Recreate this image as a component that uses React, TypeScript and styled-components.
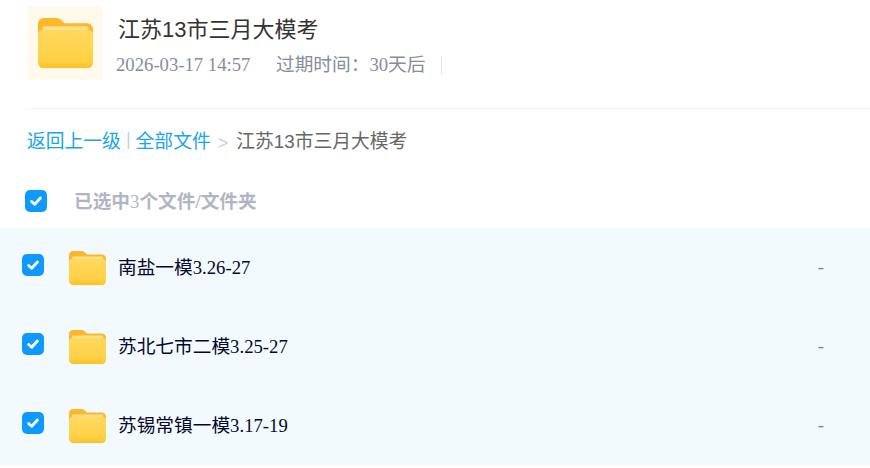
import React from "react";
import styled, { createGlobalStyle } from "styled-components";

const serif = `"Liberation Serif", "Noto Sans CJK SC", serif`;
const sans = `"Liberation Sans", "Noto Sans CJK SC", sans-serif`;

const GlobalStyle = createGlobalStyle`
  html, body {
    margin: 0;
    padding: 0;
    background: #fff;
    overflow: hidden;
  }
  * {
    box-sizing: border-box;
  }
`;

const Page = styled.div`
  width: 870px;
  height: 468px;
  overflow: hidden;
`;

const Header = styled.div`
  display: flex;
  margin-left: 27px;
  padding-top: 6px;
  height: 109px;
  border-bottom: 1px solid #f2f2f2;
`;

const Thumb = styled.div`
  width: 76px;
  height: 74px;
  background: #fffaec;
  border-radius: 4px;
  display: flex;
  align-items: center;
  justify-content: center;
`;

const HeaderInfo = styled.div`
  margin-left: 13px;
`;

const Title = styled.div`
  font-family: ${sans};
  font-size: 22px;
  line-height: 28px;
  margin: 10px 0 0 2px;
  color: #333;
`;

const Meta = styled.div`
  display: flex;
  align-items: center;
  margin-top: 9px;
  font-family: ${serif};
  font-size: 18.7px;
  line-height: 24px;
  color: #878c9c;
`;

const MetaDate = styled.span`
  width: 160px;
`;

const MetaDivider = styled.span`
  width: 1px;
  height: 19px;
  margin-left: 15px;
  background: #e6e6e6;
`;

const Breadcrumb = styled.div`
  display: flex;
  align-items: center;
  margin: 17px 0 0 27px;
  height: 26px;
  font-family: ${sans};
  font-size: 18.8px;
  color: #666;
`;

const Crumb = styled.span`
  color: #18a5ec;
`;

const Bar = styled.span`
  color: #c6d0da;
  margin: 0 5px;
  font-size: 18px;
`;

const Arrow = styled.span`
  color: #c6d0da;
  margin: 8px 8px 0 7px;
  font-size: 18px;
`;

const SelectBar = styled.div`
  display: flex;
  align-items: center;
  height: 55px;
  margin-top: 21px;
  padding: 0 0 0 25px;
`;

const SelectText = styled.span`
  margin: -2px 0 0 27px;
  font-family: ${serif};
  font-size: 18.7px;
  font-weight: 700;
  color: #b1b5c3;
`;

const Light = styled.span`
  font-weight: 400;
`;

const List = styled.div`
  background: #f2fafe;
  height: 237px;
`;

const Row = styled.div`
  display: flex;
  align-items: center;
  height: 79px;
  padding: 0 45px 0 22px;
`;

const Check = styled.div`
  width: 22px;
  height: 22px;
  border-radius: 5px;
  background: #0e99ff;
  display: flex;
  align-items: center;
  justify-content: center;
  flex: none;
`;

const RowCheck = styled(Check)`
  margin-top: -6px;
`;

const RowIcon = styled.div`
  margin: 1px 0 0 25px;
  display: flex;
`;

const RowName = styled.div`
  flex: 1;
  margin: -5px 0 0 12px;
  font-family: ${serif};
  font-size: 18.7px;
  color: #05082c;
`;

const RowSize = styled.div`
  font-family: ${serif};
  font-size: 18.7px;
  margin: -2px 1px 0 0;
  color: #7b8494;
`;

function CheckMark() {
  return (
    <svg width="14" height="14" viewBox="0 0 14 14" fill="none">
      <path
        d="M2.6 7.4 5.7 10.3 11.4 4"
        stroke="#fff"
        strokeWidth="2.8"
        strokeLinecap="round"
        strokeLinejoin="round"
      />
    </svg>
  );
}

function FolderIcon({ id, size }: { id: string; size: number }) {
  return (
    <svg
      width={size}
      height={(size * 34) / 37}
      viewBox="0 0 37 34"
      fill="none"
    >
      <defs>
        <linearGradient id={id} x1="0" y1="0" x2="0" y2="1">
          <stop offset="0" stopColor="#ffd95e" />
          <stop offset="0.8" stopColor="#ffd044" />
          <stop offset="1" stopColor="#ffbf24" />
        </linearGradient>
      </defs>
      <path
        d="M0 4C0 1.8 1.800 0 4 0h8.600c1.200 0 2.200.5 3 1.300L18 3.600h15c2.200 0 4 1.800 4 4V14H0Z"
        fill="#ffb62a"
      />
      <path d="M3 7.200c0-.9.7-1.600 1.600-1.600h27.800c.9 0 1.600.7 1.600 1.600V12H3Z" fill="#ffe08a" />
      <path
        d="M0 11c0-1.700 1.300-3 3-3h31c1.700 0 3 1.300 3 3v19c0 2.200-1.800 4-4 4H4c-2.200 0-4-1.800-4-4Z"
        fill={`url(#${id})`}
      />
    </svg>
  );
}

const files = [
  { name: "南盐一模3.26-27" },
  { name: "苏北七市二模3.25-27" },
  { name: "苏锡常镇一模3.17-19" },
];

export default function App() {
  return (
    <Page>
      <GlobalStyle />
      <Header>
        <Thumb>
          <FolderIcon id="folder-large" size={55} />
        </Thumb>
        <HeaderInfo>
          <Title>江苏13市三月大模考</Title>
          <Meta>
            <MetaDate>2026-03-17 14:57</MetaDate>
            <span>过期时间：30天后</span>
            <MetaDivider />
          </Meta>
        </HeaderInfo>
      </Header>
      <Breadcrumb>
        <Crumb>返回上一级</Crumb>
        <Bar>|</Bar>
        <Crumb>全部文件</Crumb>
        <Arrow>&gt;</Arrow>
        <span>江苏13市三月大模考</span>
      </Breadcrumb>
      <SelectBar>
        <Check>
          <CheckMark />
        </Check>
        <SelectText>
          已选中<Light>3</Light>个文件/文件夹
        </SelectText>
      </SelectBar>
      <List>
        {files.map((file, i) => (
          <Row key={file.name}>
            <RowCheck>
              <CheckMark />
            </RowCheck>
            <RowIcon>
              <FolderIcon id={`folder-${i}`} size={37} />
            </RowIcon>
            <RowName>{file.name}</RowName>
            <RowSize>-</RowSize>
          </Row>
        ))}
      </List>
    </Page>
  );
}
